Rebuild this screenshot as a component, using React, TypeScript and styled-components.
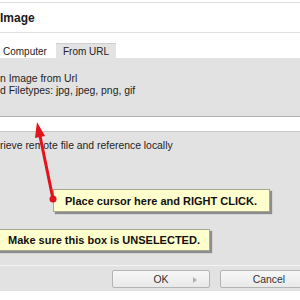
import React from "react";
import styled, { createGlobalStyle } from "styled-components";

const GlobalStyle = createGlobalStyle`
  html, body {
    margin: 0;
    padding: 0;
    background: #ffffff;
  }
  body {
    font-family: "Liberation Sans", Arial, sans-serif;
  }
`;

const Dialog = styled.div`
  position: relative;
  width: 300px;
  height: 300px;
  overflow: hidden;
  background: #ffffff;
  display: flex;
  flex-direction: column;
`;

const TopRule = styled.div`
  height: 2px;
  border-bottom: 1px solid #dedede;
`;

const TitleBar = styled.div`
  height: 29px;
  display: flex;
  align-items: center;
  font-size: 12px;
  font-weight: bold;
  color: #1a1a1a;
  border-bottom: 1px solid #dedede;
`;

const TabRow = styled.div`
  height: 25px;
  display: flex;
  align-items: flex-end;
  background: #ffffff;
`;

const Tab = styled.div<{ active?: boolean }>`
  height: 15px;
  box-sizing: border-box;
  display: flex;
  align-items: center;
  white-space: nowrap;
  padding-left: ${(p) => (p.active ? "7px" : "3px")};
  width: ${(p) => (p.active ? "60px" : "56px")};
  font-size: 10px;
  color: #222;
  background: ${(p) => (p.active ? "#e3e3e3" : "#ffffff")};
  border-top: 1px solid ${(p) => (p.active ? "#cfcfcf" : "transparent")};
`;

const Panel = styled.div`
  height: 207px;
  background: #e2e2e2;
  padding-top: 15px;
  box-sizing: border-box;
  display: flex;
  flex-direction: column;
`;

const Line = styled.div`
  font-size: 10.4px;
  line-height: 12px;
  color: #1e1e1e;
  white-space: nowrap;
`;

const UrlInput = styled.div`
  margin: 19px 0 8px;
  height: 14px;
  background: #ffffff;
  border-top: 1px solid #b0b0b0;
  border-bottom: 1px solid #c8c8c8;
`;

const Footer = styled.div`
  height: 26px;
  background: #e2e2e2;
  border-top: 1px solid #f3f3f3;
  display: flex;
  align-items: flex-start;
  gap: 10px;
  padding: 4px 0 0 112px;
  box-sizing: border-box;
`;

const Button = styled.div`
  position: relative;
  flex: 0 0 98px;
  height: 18px;
  box-sizing: border-box;
  border: 1px solid #b4b4b4;
  border-radius: 2px;
  background: linear-gradient(#f7f7f7, #e9e9e9);
  display: flex;
  align-items: center;
  justify-content: center;
  font-size: 10.4px;
  color: #333;

  &::after {
    content: "";
    position: absolute;
    right: 12px;
    top: 6px;
    border-left: 4px solid #b0b0a8;
    border-top: 3px solid transparent;
    border-bottom: 3px solid transparent;
  }
`;

const Callout = styled.div<{ left: number; top: number; w: number; h: number }>`
  position: absolute;
  left: ${(p) => p.left}px;
  top: ${(p) => p.top}px;
  width: ${(p) => p.w}px;
  height: ${(p) => p.h}px;
  box-sizing: border-box;
  background: #ffffcd;
  border: 1px solid #a8a890;
  box-shadow: 2px 2px 1px #8c8c8c;
  display: flex;
  align-items: center;
  padding-left: ${(p) => (p.left < 0 ? 7 - p.left : 11)}px;
  font-size: 11px;
  font-weight: bold;
  color: #111;
  white-space: nowrap;
`;

const Overlay = styled.svg`
  position: absolute;
  left: 0;
  top: 0;
  pointer-events: none;
`;

export default function App() {
  return (
    <>
      <GlobalStyle />
      <Dialog>
        <TopRule />
        <TitleBar>Image</TitleBar>
        <TabRow>
          <Tab>Computer</Tab>
          <Tab active>From URL</Tab>
        </TabRow>
        <Panel>
          <Line>n Image from Url</Line>
          <Line>d Filetypes: jpg, jpeg, png, gif</Line>
          <UrlInput />
          <Line>rieve remote file and reference locally</Line>
        </Panel>
        <Footer>
          <Button>OK</Button>
          <Button>Cancel</Button>
        </Footer>

        <Callout left={53} top={189} w={217} h={23}>
          Place cursor here and RIGHT CLICK.
        </Callout>
        <Callout left={-5} top={229} w={215} h={22}>
          Make sure this box is UNSELECTED.
        </Callout>

        <Overlay width="300" height="300" viewBox="0 0 300 300">
          <line x1="53" y1="199" x2="40" y2="136" stroke="#e3121b" strokeWidth="3" />
          <polygon points="37,122 45,136 35,138" fill="#e3121b" />
          <circle cx="53" cy="199" r="3.5" fill="#e3121b" />
        </Overlay>
      </Dialog>
    </>
  );
}
